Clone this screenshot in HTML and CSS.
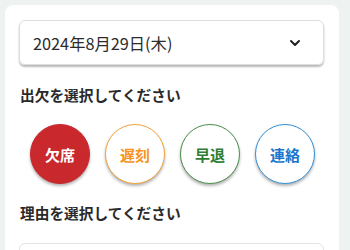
FILE: index.html
```html
<!DOCTYPE html>
<html lang="ja">
<head>
<meta charset="utf-8">
<link rel="stylesheet" href="styles.css">
</head>
<body>
<div class="page">
  <div class="card">
    <div class="select">
      <span class="select-text">2024年8月29日(木)</span>
      <svg class="chevron" width="12" height="8" viewBox="0 0 12 8"><path d="M2 2 L6 6 L10 2" fill="none" stroke="#222" stroke-width="2" stroke-linecap="round" stroke-linejoin="round"/></svg>
    </div>
    <div class="label first">出欠を選択してください</div>
    <div class="choices">
      <div class="choice absent">欠席</div>
      <div class="choice late">遅刻</div>
      <div class="choice early">早退</div>
      <div class="choice contact">連絡</div>
    </div>
    <div class="label">理由を選択してください</div>
    <div class="select empty"></div>
  </div>
</div>
</body>
</html>
```
FILE: styles.css
```css
html, body {
  margin: 0;
  padding: 0;
  background: #eef2f1;
  font-family: "Noto Sans CJK JP", "Noto Sans", sans-serif;
  overflow: hidden;
}
.page {
  padding: 5px 11px 0 5px;
}
.card {
  background: #fff;
  border-radius: 8px;
  padding: 15px 15px 20px 14px;
  min-height: 300px;
}
.select {
  height: 45px;
  box-sizing: border-box;
  border: 1px solid #dedede;
  border-radius: 6px;
  box-shadow: 0 2px 2px rgba(0,0,0,0.28);
  display: flex;
  align-items: center;
  justify-content: space-between;
  padding: 0 22px 0 13px;
}
.select-text {
  font-size: 16.3px;
  color: #2b2b2b;
  line-height: 1;
  padding-top: 2px;
}
.chevron {
  display: block;
}
.label {
  font-size: 14.7px;
  font-weight: bold;
  color: #2a2a2a;
  line-height: 20px;
  margin-top: 19px;
  padding-left: 1px;
}
.label.first {
  margin-top: 20px;
}
.choices {
  display: flex;
  justify-content: center;
  gap: 15px;
  margin-top: 19px;
  padding-left: 2px;
}
.choice {
  width: 60px;
  height: 60px;
  box-sizing: border-box;
  border-radius: 50%;
  display: flex;
  align-items: center;
  justify-content: center;
  font-size: 15px;
  font-weight: bold;
  background: #fff;
  border: 1.5px solid;
  box-shadow: 0 2px 3px rgba(0,0,0,0.3);
}
.absent {
  background: #c9282d;
  border-color: #c9282d;
  color: #fff;
}
.late {
  border-color: #f2a33a;
  color: #f7941d;
}
.early {
  border-color: #4a8f4a;
  color: #2e7d32;
}
.contact {
  border-color: #3590d6;
  color: #1a75cc;
}
.select.empty {
  margin-top: 20px;
  box-shadow: none;
  border-color: #e4e4e4;
}
```
